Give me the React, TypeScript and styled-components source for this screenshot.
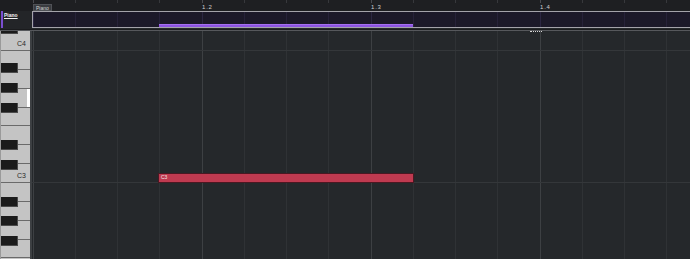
import styled, { createGlobalStyle } from 'styled-components'

const GlobalStyle = createGlobalStyle`
    html, body {
        margin: 0;
        padding: 0;
        background: #25282b;
        overflow: hidden;
    }
    * {
        box-sizing: border-box;
    }
`

const BAR = 169
const LEFT = 32

// one bar of grid: bar line at 0, beat lines every quarter
const barLines = (bar: string, beat: string) => `repeating-linear-gradient(90deg,
    ${bar} 0 1px, transparent 1px 42px,
    ${beat} 42px 43px, transparent 43px 84px,
    ${beat} 84px 85px, transparent 85px 126px,
    ${beat} 126px 127px, transparent 127px ${BAR}px)`

const Editor = styled.div`
    width: 690px;
    height: 259px;
    display: flex;
    flex-direction: column;
    background: #25282b;
    font-family: "Liberation Sans", Arial, sans-serif;
    overflow: hidden;
`

const TopRow = styled.div`
    display: flex;
    height: 11px;
    flex-shrink: 0;
    background: #1e1f22;
`

const Corner = styled.div`
    width: ${LEFT}px;
    flex-shrink: 0;
    background: #1d1e21;
`

const Ruler = styled.div`
    flex: 1;
    display: flex;
    padding-left: 1px;
`

const BarCell = styled.div`
    width: ${BAR}px;
    flex-shrink: 0;
    display: flex;
    align-items: flex-end;
    background: ${barLines('#4a4b50', '#37383c')};
    background-size: 100% 3px;
    background-repeat: no-repeat;
`

const BarLabel = styled.span`
    font-size: 6px;
    line-height: 6px;
    color: #d0d0d0;
    padding: 0 0 1px 0;
    letter-spacing: 0.8px;
`

const TrackTag = styled.span`
    font-size: 5px;
    line-height: 6px;
    color: #d4d4d4;
    background: #3a3c40;
    border: 1px solid #505257;
    padding: 0 2px;
    height: 7px;
`

const OverviewRow = styled.div`
    display: flex;
    height: 19px;
    flex-shrink: 0;
    border-bottom: 1px solid #1a1b1d;
`

const TrackHead = styled.div`
    width: ${LEFT}px;
    flex-shrink: 0;
    display: flex;
    align-items: flex-start;
    background: #232528;
    padding: 1px 0 0 4px;
    position: relative;
    &::before {
        content: '';
        position: absolute;
        left: 1px;
        top: 0;
        bottom: 1px;
        width: 2px;
        background: #7a4ed0;
    }
`

const TrackName = styled.span`
    font-size: 5px;
    line-height: 6px;
    font-weight: bold;
    color: #f2f2f2;
    text-decoration: underline;
`

const Overview = styled.div`
    flex: 1;
    position: relative;
    height: 17px;
    border: 1px solid #a4a3aa;
    border-right: none;
    background-color: #1c1929;
    background-image: ${barLines('#2c2742', '#272239')};
`

const OverviewClip = styled.div<{ $start: number; $len: number }>`
    position: absolute;
    left: ${({ $start }) => $start}px;
    width: ${({ $len }) => $len}px;
    top: 12px;
    height: 3px;
    background: #8c54e0;
    border-top: 1px solid #a46ff0;
`

const Divider = styled.div`
    height: 1px;
    flex-shrink: 0;
    background: #56585c;
`

const Body = styled.div`
    flex: 1;
    display: flex;
    min-height: 0;
`

const Keyboard = styled.div`
    width: ${LEFT}px;
    flex-shrink: 0;
    display: flex;
    flex-direction: column;
    border-right: 2px solid #3d4043;
    border-left: 1px solid #9a9a9a;
    overflow: hidden;
`

const WhiteKey = styled.div<{ $h: number; $active?: boolean }>`
    position: relative;
    height: ${({ $h }) => $h}px;
    flex-shrink: 0;
    background: #c4c4c4;
    border-bottom: 1px solid #6a6a6a;
    display: flex;
    align-items: flex-end;
    justify-content: flex-end;
    padding: 0 4px 3px 0;
    ${({ $active }) => $active && `
        &::after {
            content: '';
            position: absolute;
            right: 0;
            top: 0;
            bottom: 0;
            width: 3px;
            background: #ffffff;
        }
    `}
`

const BlackKey = styled.div<{ $off: number }>`
    position: absolute;
    z-index: 1;
    left: -1px;
    top: ${({ $off }) => $off}px;
    width: 18px;
    height: 10px;
    background: #1b1b1b;
    border-right: 1px solid #4a4a4a;
    border-bottom: 1px solid #4a4a4a;
`

const KeyLabel = styled.span`
    font-size: 7px;
    line-height: 7px;
    color: #2b2b2b;
`

const Grid = styled.div`
    flex: 1;
    position: relative;
    display: flex;
    flex-direction: column;
    overflow: hidden;
    background-color: #25282b;
    background-image: ${barLines('#3d4043', '#2f3235')};
    background-position: 1px 0;
`

const PitchRow = styled.div<{ $h: number; $octave?: boolean }>`
    position: relative;
    height: ${({ $h }) => $h}px;
    flex-shrink: 0;
    border-bottom: 1px solid ${({ $octave }) => ($octave ? '#34373a' : 'transparent')};
`

const Note = styled.div<{ $start: number; $len: number }>`
    position: absolute;
    left: ${({ $start }) => $start}px;
    width: ${({ $len }) => $len}px;
    top: 1px;
    height: 10px;
    background: #bf3a50;
    border: 1px solid #4a1822;
    font-size: 5px;
    line-height: 7px;
    color: #f4e4e6;
    padding-left: 2px;
`

const Handle = styled.div`
    position: absolute;
    top: 0;
    left: 498px;
    width: 12px;
    border-top: 1px dotted #d8d8d8;
`

const whiteKeys = [
    { h: 20, black: -7, label: 'C4' },
    { h: 19 },
    { h: 19, black: -7 },
    { h: 19, black: -6, active: true },
    { h: 18, black: -5 },
    { h: 19 },
    { h: 19, black: -5 },
    { h: 19, black: -4, label: 'C3' },
    { h: 19 },
    { h: 19, black: -5 },
    { h: 19, black: -5 },
    { h: 18, black: -4 },
    { h: 19 },
]

// semitone rows from C#4 (partly hidden) downward, each 11px
const rows = ['C#4', 'C4', 'B3', 'A#3', 'A3', 'G#3', 'G3', 'F#3', 'F3', 'E3', 'D#3', 'D3', 'C#3', 'C3',
    'B2', 'A#2', 'A2', 'G#2', 'G2', 'F#2', 'F2', 'E2']

const notes = [{ pitch: 'C3', start: 126, len: 256 }]

function App() {
    return (
        <Editor>
            <GlobalStyle />
            <TopRow>
                <Corner />
                <Ruler>
                    <BarCell>
                        <TrackTag>Piano</TrackTag>
                    </BarCell>
                    <BarCell><BarLabel>1.2</BarLabel></BarCell>
                    <BarCell><BarLabel>1.3</BarLabel></BarCell>
                    <BarCell><BarLabel>1.4</BarLabel></BarCell>
                </Ruler>
            </TopRow>
            <OverviewRow>
                <TrackHead>
                    <TrackName>Piano</TrackName>
                </TrackHead>
                <Overview>
                    <OverviewClip $start={126} $len={254} />
                </Overview>
            </OverviewRow>
            <Divider />
            <Body>
                <Keyboard>
                    {whiteKeys.map((k, i) => (
                        <WhiteKey key={i} $h={k.h} $active={k.active}>
                            {k.black !== undefined && <BlackKey $off={k.black} />}
                            {k.label && <KeyLabel>{k.label}</KeyLabel>}
                        </WhiteKey>
                    ))}
                </Keyboard>
                <Grid>
                    {rows.map((p, i) => (
                        <PitchRow key={p} $h={i === 0 ? 9 : 11} $octave={p.startsWith('C') && !p.startsWith('C#')}>
                            {notes.filter(n => n.pitch === p).map(n => (
                                <Note key={n.start} $start={n.start} $len={n.len}>{n.pitch}</Note>
                            ))}
                        </PitchRow>
                    ))}
                    <Handle />
                </Grid>
            </Body>
        </Editor>
    )
}

export default App
